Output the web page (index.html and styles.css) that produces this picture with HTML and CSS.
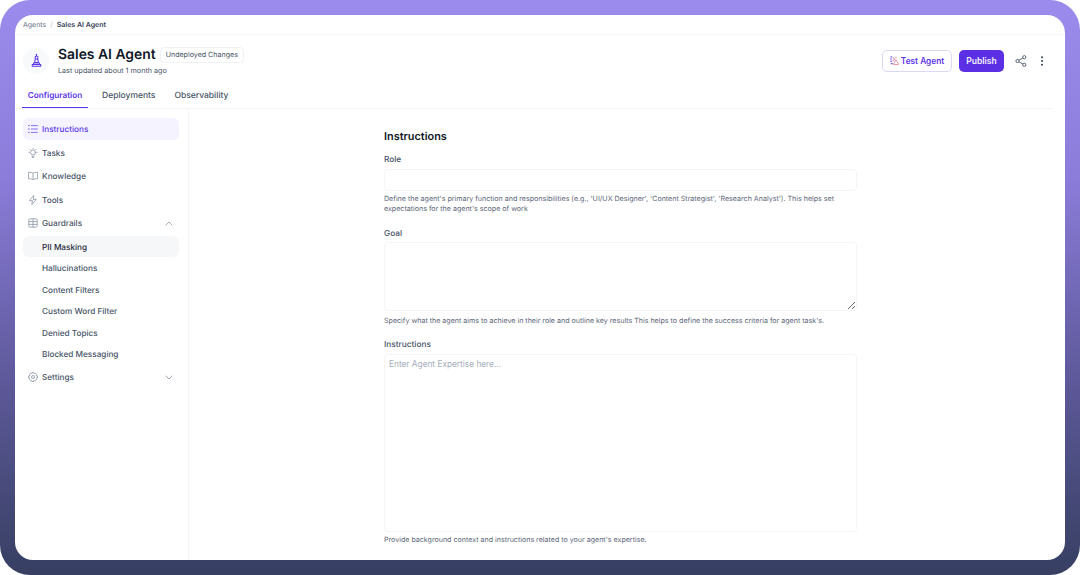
FILE: index.html
```html
<!DOCTYPE html>
<html>
<head>
	<title>Sales AI Agent</title>
	<link rel="stylesheet" href="styles.css">
</head>
<body>
	<div class="frame">
		<div class="card">

			<!-- Breadcrumb -->
			<div class="breadcrumb">
				<span>Agents</span>
				<span class="crumb-sep">/</span>
				<span class="crumb-current">Sales AI Agent</span>
			</div>

			<!-- Agent header -->
			<div class="agent-header">
				<div class="agent-avatar">
					<svg width="11" height="17" viewBox="0 0 14 18" fill="none" stroke="#5b35e8" stroke-width="1.3" stroke-linejoin="round" stroke-linecap="round">
						<path d="M7 1v2"/>
						<path d="M5.2 4.5 7 3l1.8 1.5L8.4 7H5.6z"/>
						<path d="M5.4 7 4.6 12h4.8L8.6 7"/>
						<path d="M3.6 12h6.8l.8 2.2H2.8z"/>
						<path d="M1.6 14.2h10.8v2.2H1.6z"/>
					</svg>
				</div>
				<div class="agent-info">
					<div class="agent-title-row">
						<h1 class="agent-title">Sales AI Agent</h1>
						<span class="status-badge">Undeployed Changes</span>
					</div>
					<p class="agent-updated">Last updated about 1 month ago</p>
				</div>
				<div class="header-actions">
					<button class="btn-test">
						<svg width="9" height="9" viewBox="0 0 10 10" fill="none" stroke-width="1" stroke-linecap="round" stroke-linejoin="round">
							<path d="M.8 1h1.2M.6 3.4h1M.8 5.8h1.4M1.2 8.6h1.600" stroke="#5b35e8"/>
							<path d="M3.4 1.6 4.8 3.4M4.800 3.400 3.600 5.200" stroke="#c77dba"/>
							<path d="M3.800 9 6.600 4.200 9.400 9zM6.600 1v1.400" stroke="#e58f9e"/>
						</svg>
						Test Agent
					</button>
					<button class="btn-publish">Publish</button>
					<svg class="icon-share" width="12" height="12" viewBox="0 0 12 12" fill="none" stroke="#475467" stroke-width="0.9">
						<circle cx="9.3" cy="2.2" r="1.6"/>
						<circle cx="2.5" cy="6" r="1.6"/>
						<circle cx="9.3" cy="9.8" r="1.6"/>
						<path d="M3.9 5.2 7.9 3M3.9 6.8l4 2.2"/>
					</svg>
					<svg class="icon-more" width="4" height="10" viewBox="0 0 4 10" fill="#344054">
						<circle cx="2" cy="1.2" r="1"/>
						<circle cx="2" cy="5" r="1"/>
						<circle cx="2" cy="8.8" r="1"/>
					</svg>
				</div>
			</div>

			<!-- Tabs -->
			<div class="tabs">
				<div class="tab tab-active">Configuration</div>
				<div class="tab">Deployments</div>
				<div class="tab">Observability</div>
			</div>

			<div class="content">

				<!-- Left menu -->
				<div class="sidebar">
					<div class="nav-item nav-active">
						<svg width="10" height="10" viewBox="0 0 10 10" fill="none" stroke="#7f62ee" stroke-width="0.9" stroke-linecap="round">
							<path d="M3.4 1.6h6M3.4 5h6M3.4 8.4h6M.4 1.6h1M.4 5h1M.4 8.4h1"/>
						</svg>
						Instructions
					</div>
					<div class="nav-item">
						<svg width="10" height="10" viewBox="0 0 10 10" fill="none" stroke="#8a94a6" stroke-width="0.8" stroke-linecap="round">
							<circle cx="5" cy="4.4" r="2.5"/>
							<path d="M3.9 8.3h2.2M4.3 9.6h1.4M5 .2v.5M.8 4.4h.5M8.7 4.4h.5M2 1.4l.4.4M8 1.4l-.4.4"/>
						</svg>
						Tasks
					</div>
					<div class="nav-item">
						<svg width="10" height="10" viewBox="0 0 10 10" fill="none" stroke="#8a94a6" stroke-width="0.8" stroke-linejoin="round">
							<path d="M5 2.4C4.2 1.6 3 1.3.4 1.3v6.4c2.6 0 3.8.3 4.6 1.1.8-.8 2-1.1 4.6-1.1V1.3C7 1.3 5.8 1.6 5 2.4zM5 2.4v6.4"/>
						</svg>
						Knowledge
					</div>
					<div class="nav-item">
						<svg width="10" height="10" viewBox="0 0 10 10" fill="none" stroke="#8a94a6" stroke-width="0.8" stroke-linejoin="round">
							<path d="M5.8.5 1.4 5.6h3l-.5 3.9 4.400-5.100h-3z"/>
						</svg>
						Tools
					</div>
					<div class="nav-item">
						<svg width="10" height="10" viewBox="0 0 10 10" fill="none" stroke="#8a94a6" stroke-width="0.8">
							<rect x="0.8" y="0.8" width="8.4" height="8.4" rx="1.4"/>
							<path d="M.8 3.6h8.4M.8 6.4h8.4M5 .8v8.4"/>
						</svg>
						Guardrails
						<svg class="chevron" width="8" height="5" viewBox="0 0 8 5" fill="none" stroke="#8a94a6" stroke-width="0.8" stroke-linecap="round">
							<path d="M1 4 4 1l3 3"/>
						</svg>
					</div>
					<div class="sub-list">
						<div class="sub-item sub-active">PII Masking</div>
						<div class="sub-item">Hallucinations</div>
						<div class="sub-item">Content Filters</div>
						<div class="sub-item">Custom Word Filter</div>
						<div class="sub-item">Denied Topics</div>
						<div class="sub-item">Blocked Messaging</div>
					</div>
					<div class="nav-item">
						<svg width="10" height="10" viewBox="0 0 10 10" fill="none" stroke="#8a94a6" stroke-width="0.8" stroke-linejoin="round">
							<circle cx="5" cy="5" r="1.5"/>
							<path d="M4.1.5h1.8l.3 1.3 1.2-.5 1.2 1.3-.6 1.1 1.5.4v1.8l-1.5.4.6 1.1-1.2 1.3-1.2-.5-.3 1.300H4.100l-.3-1.300-1.200.5-1.200-1.300.6-1.100L.5 5.900V4.100l1.500-.4-.6-1.100 1.200-1.300 1.200.5z"/>
						</svg>
						Settings
						<svg class="chevron" width="8" height="5" viewBox="0 0 8 5" fill="none" stroke="#8a94a6" stroke-width="0.8" stroke-linecap="round">
							<path d="M1 1l3 3 3-3"/>
						</svg>
					</div>
				</div>

				<!-- Instructions form -->
				<div class="main">
					<div class="form">
						<h2 class="form-title">Instructions</h2>

						<label class="field-label">Role</label>
						<input class="field-input" type="text">
						<p class="field-help role-help">Define the agent's primary function and responsibilities (e.g., 'UI/UX Designer', 'Content Strategist', 'Research Analyst'). This helps set expectations for the agent's scope of work</p>

						<label class="field-label">Goal</label>
						<textarea class="field-area goal-area"></textarea>
						<p class="field-help">Specify what the agent aims to achieve in their role and outline key results This helps to define the success criteria for agent task's.</p>

						<label class="field-label">Instructions</label>
						<textarea class="field-area expertise-area" placeholder="Enter Agent Expertise here..."></textarea>
						<p class="field-help">Provide background context and instructions related to your agent's expertise.</p>
					</div>
				</div>

			</div>
		</div>
	</div>
</body>
</html>
```

FILE: styles.css
```css
/* Page */
html, body {
	margin: 0;
	height: 100%;
	background-color: #fff;
}

body {
	font-family: Inter, "Liberation Sans", sans-serif;
	color: #101828;
	overflow: hidden;
	text-rendering: geometricPrecision;
}

/* Gradient frame round the app */
.frame {
	box-sizing: border-box;
	height: 575px;
	padding: 15px;
	border-radius: 30px;
	background: linear-gradient(180deg, #9b8bec 0%, #8c7ddb 30%, #5f5a9c 65%, #373f62 100%);
}

/* White app card */
.card {
	display: flex;
	flex-direction: column;
	height: 545px;
	background-color: #fff;
	border-radius: 18px;
	overflow: hidden;
}

/* Breadcrumb */
.breadcrumb {
	display: flex;
	align-items: center;
	gap: 4px;
	flex: none;
	height: 19px;
	padding-left: 8px;
	font-size: 7px;
	color: #667085;
	border-bottom: 1px solid #f7f7f9;
}

.crumb-sep {
	color: #b9bfca;
}

.crumb-current {
	font-weight: 600;
	color: #344054;
}

/* Agent header */
.agent-header {
	display: flex;
	align-items: center;
	flex: none;
	height: 47px;
	padding: 2px 21px 0 8px;
}

.agent-avatar {
	display: flex;
	align-items: center;
	justify-content: center;
	width: 26px;
	height: 26px;
	margin-right: 9px;
	border-radius: 50%;
	background-color: #f8f9fb;
}

.agent-title-row {
	display: flex;
	align-items: center;
	gap: 4px;
}

.agent-title {
	margin: 0;
	padding-top: 1px;
	font-size: 13.9px;
	line-height: 18px;
	font-weight: 600;
	color: #101828;
}

.status-badge {
	padding: 2px 5px;
	font-size: 7.1px;
	line-height: 10px;
	color: #475467;
	border: 1px solid #f0f1f4;
	border-radius: 4px;
}

.agent-updated {
	margin: 2px 0 0;
	font-size: 7.2px;
	line-height: 10px;
	color: #475467;
}

.header-actions {
	display: flex;
	align-items: center;
	margin-left: auto;
}

.btn-test {
	display: flex;
	align-items: center;
	justify-content: center;
	gap: 2px;
	box-sizing: border-box;
	width: 70px;
	height: 22px;
	padding: 0;
	font-family: inherit;
	font-size: 8.3px;
	font-weight: 600;
	color: #5b35e8;
	background-color: #fff;
	border: 1px solid #dcd8f3;
	border-radius: 5px;
}

.btn-publish {
	box-sizing: border-box;
	width: 45px;
	height: 22px;
	margin-left: 7px;
	padding: 0;
	font-family: inherit;
	font-size: 8.5px;
	font-weight: 600;
	color: #f4f1ff;
	background-color: #5b2fe4;
	border: none;
	border-radius: 5px;
}

.icon-share {
	margin-left: 11px;
}

.icon-more {
	margin-left: 13px;
}

/* Tabs */
.tabs {
	display: flex;
	flex: none;
	height: 24px;
	margin-right: 12px;
	padding-left: 7px;
	border-bottom: 1px solid #f2f3f6;
}

.tab {
	box-sizing: border-box;
	height: 24px;
	padding: 0 5px;
	margin-right: 9px;
	font-size: 8.5px;
	font-weight: 500;
	line-height: 24px;
	color: #475467;
}

.tab-active {
	width: 66px;
	padding: 0;
	text-align: center;
	color: #5b35e8;
	font-size: 8.2px;
	font-weight: 600;
	line-height: 22px;
	border-bottom: 1px solid #5b35e8;
}

/* Main area */
.content {
	display: flex;
	flex: 1;
	min-height: 0;
}

/* Left menu */
.sidebar {
	box-sizing: border-box;
	flex: none;
	width: 174px;
	padding: 9px 9px 0 8px;
	border-right: 1px solid #f5f5f8;
}

.nav-item {
	display: flex;
	align-items: center;
	gap: 4px;
	box-sizing: border-box;
	height: 22px;
	margin-bottom: 1.6px;
	padding: 0 5px;
	font-size: 8.2px;
	font-weight: 500;
	color: #475467;
	border-radius: 6px;
}

.nav-active {
	color: #5b35e8;
	background-color: #f4f3ff;
}

.chevron {
	margin-left: auto;
	margin-right: 1px;
}

.sub-list {
	margin: 1px 0 2px;
}

.sub-item {
	box-sizing: border-box;
	height: 21.4px;
	padding-left: 19px;
	font-size: 8.2px;
	font-weight: 500;
	line-height: 23px;
	color: #475467;
	border-radius: 6px;
}

.sub-active {
	color: #1d2939;
	background-color: #f6f7f9;
}

/* Instructions form */
.main {
	flex: 1;
	padding-left: 195px;
}

.form {
	width: 473px;
}

.form-title {
	margin: 20px 0 11px;
	font-size: 10.9px;
	line-height: 15px;
	font-weight: 600;
	color: #101828;
}

.field-label {
	display: block;
	font-size: 8.3px;
	line-height: 10px;
	font-weight: 500;
	color: #475467;
}

.field-input,
.field-area {
	display: block;
	box-sizing: border-box;
	width: 473px;
	margin-top: 4px;
	padding: 4px;
	font-family: inherit;
	font-size: 8.3px;
	background-color: #fff;
	border: 1px solid #f5f5f7;
	border-radius: 4px;
	outline: none;
}

.field-input {
	height: 22px;
}

.goal-area {
	height: 69px;
	margin-top: 3px;
	resize: vertical;
}

.expertise-area {
	height: 178px;
	resize: none;
}

.field-area::placeholder {
	color: #a6adba;
}

.field-help {
	margin: 3px 0 14px;
	font-size: 7.1px;
	line-height: 10px;
	color: #5d6779;
}

.role-help {
	margin-bottom: 15px;
}

.goal-area + .field-help {
	margin-top: 5px;
}
```
